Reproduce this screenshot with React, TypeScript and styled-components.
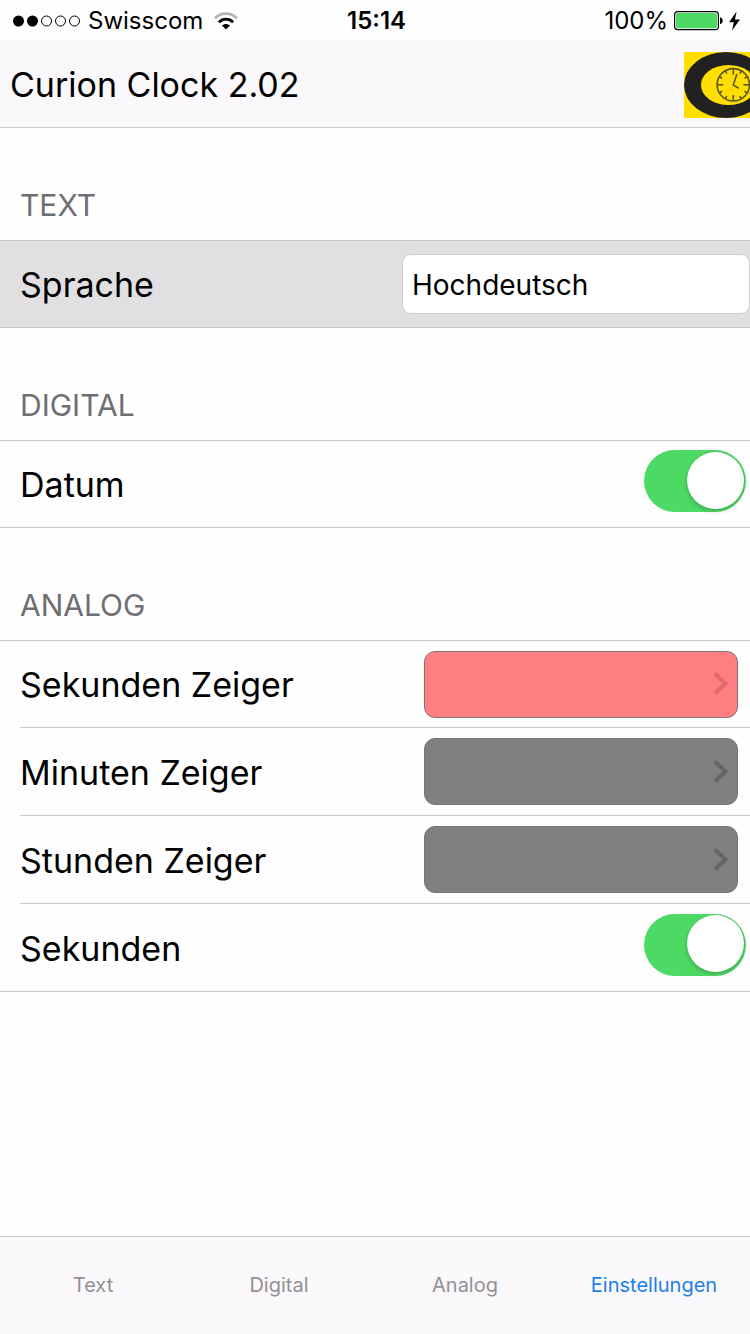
import React, { useState } from 'react';
import styled, { createGlobalStyle } from 'styled-components';

const GlobalStyle = createGlobalStyle`
  *, *::before, *::after { box-sizing: border-box; }
  body {
    margin: 0;
    background: #fefefe;
    color: #000;
    font-family: Inter, Roboto, "Liberation Sans", sans-serif;
  }
  button, select { font: inherit; color: inherit; }
`;

const LINE = '#c9c8cc';
const BAR = '#faf8fb';

const Page = styled.div`
  display: flex;
  flex-direction: column;
  min-height: 100vh;
`;

const StatusBar = styled.div`
  display: grid;
  grid-template-columns: 1fr auto 1fr;
  align-items: center;
  height: 40px;
  padding: 2px 10px 0 13px;
  font-size: 24px;
  line-height: 38px;
`;

const StatusGroup = styled.div<{ $end?: boolean; $gap: number }>`
  display: flex;
  align-items: center;
  justify-content: ${(p) => (p.$end ? 'flex-end' : 'flex-start')};
  gap: ${(p) => p.$gap}px;
`;

const Time = styled.span`
  font-weight: 600;
`;

const TitleBar = styled.header`
  display: flex;
  align-items: center;
  justify-content: space-between;
  height: 88px;
  padding: 2px 0 0 10px;
  background: ${BAR};
  border-bottom: 1px solid ${LINE};
`;

const Title = styled.h1`
  margin: 0;
  font-size: 34px;
  font-weight: 400;
  line-height: 40px;
`;

const Main = styled.main`
  flex: 1;
`;

const SectionTitle = styled.h2`
  margin: 0;
  padding: 57px 20px 15px;
  color: #6f6e73;
  font-size: 30px;
  font-weight: 400;
  line-height: 40px;
`;

const Group = styled.ul`
  margin: 0;
  padding: 0;
  list-style: none;
  border-top: 1px solid ${LINE};
  border-bottom: 1px solid ${LINE};
`;

const RowBody = styled.div<{ $inset: number }>`
  display: flex;
  align-items: center;
  justify-content: space-between;
  height: 88px;
  padding-right: ${(p) => p.$inset}px;
  border-bottom: 1px solid ${LINE};
`;

const RowItem = styled.li<{ $selected?: boolean }>`
  padding-left: 20px;
  background: ${(p) => (p.$selected ? '#e1dfe2' : 'transparent')};

  &:last-child > ${RowBody} { height: 87px; border-bottom: 0; }
  &:only-child > ${RowBody} { height: 86px; }
  &:first-child:not(:only-child) > ${RowBody} { height: 87px; }
`;

const RowLabel = styled.label`
  padding-top: 2px;
  font-size: 34px;
  line-height: 40px;
`;

const Select = styled.select`
  appearance: none;
  width: 348px;
  height: 60px;
  padding: 2px 9px 0;
  border: 1px solid #cdccd0;
  border-radius: 9px;
  background: #fff;
  font-size: 28px;
`;

const Swatch = styled.button<{ $color: string }>`
  display: flex;
  align-items: center;
  justify-content: flex-end;
  width: 314px;
  height: 67px;
  padding: 0 8px;
  border: 1px solid #7b7376;
  border-radius: 11px;
  background: ${(p) => p.$color};
`;

const Switch = styled.input`
  appearance: none;
  display: flex;
  align-items: center;
  width: 102px;
  height: 62px;
  margin: 0 0 6px;
  padding: 0 2px 2px;
  border-radius: 31px;
  background: #e5e5ea;

  &::before {
    content: '';
    width: 57px;
    height: 57px;
    border-radius: 50%;
    background: #fff;
    box-shadow: 0 3px 4px rgba(0, 0, 0, 0.14), 0 0 2px rgba(0, 0, 0, 0.2);
  }

  &:checked {
    justify-content: flex-end;
    background: #4cd964;
  }
`;

const TabBar = styled.nav`
  display: flex;
  height: 98px;
  border-top: 1px solid ${LINE};
  background: ${BAR};
`;

const Tab = styled.a<{ $active?: boolean }>`
  display: flex;
  align-items: center;
  justify-content: center;
  flex: 0 0 24.8%;
  padding-bottom: 2px;
  color: ${(p) => (p.$active ? '#1c81ea' : '#929195')};
  font-size: 20px;
  text-decoration: none;

  &:last-child { flex: 1; }
`;

const Signal = () => (
  <svg width="67" height="12" viewBox="0 0 67 12" aria-hidden="true">
    {[0, 1, 2, 3, 4].map((i) => (
      <circle
        key={i}
        cx={5.5 + i * 14}
        cy="6"
        r={i < 2 ? 5.5 : 5}
        fill={i < 2 ? '#000' : 'none'}
        stroke={i < 2 ? 'none' : '#000'}
      />
    ))}
  </svg>
);

const Wifi = () => (
  <svg width="28" height="18" viewBox="-3 0 28 18" fill="none" strokeWidth="2.8" aria-hidden="true">
    <path d="M1 6.2 C7 .2 17 .2 23 6.2" stroke="#b4b3b6" />
    <path d="M4.9 10.2 C9 6.2 15 6.2 19.1 10.2" stroke="#000" />
    <path d="M12 17.6 L7.9 13.6 C10.3 11.5 13.7 11.5 16.1 13.6 Z" fill="#000" />
  </svg>
);

const Battery = () => (
  <svg width="49" height="20" viewBox="0 0 49 20" aria-hidden="true">
    <rect x=".6" y=".6" width="43.8" height="18" rx="3.2" fill="#fff" stroke="#000" strokeWidth="1.2" />
    <rect x="2" y="2" width="41" height="15.2" rx="1.8" fill="#4cd964" />
    <path d="M46 6.2 C49.6 7 49.6 12.4 46 13.2 Z" fill="#000" />
  </svg>
);

const Bolt = () => (
  <svg width="11" height="20" viewBox="0 0 11 20" aria-hidden="true">
    <path d="M7.6 .4 L0 11.2 H4.8 L3 19.6 L11 8.4 H6 Z" fill="#000" />
  </svg>
);

const Logo = () => (
  <svg width="66" height="66" viewBox="0 0 66 66" role="img" aria-label="Curion">
    <rect width="66" height="66" fill="#ffde00" />
    <ellipse cx="42" cy="33" rx="42" ry="33" fill="#222122" />
    <ellipse cx="44.5" cy="33" rx="27.5" ry="20" fill="#ffde00" />
    <g stroke="#5c5418" fill="none" strokeWidth="1.6">
      <circle cx="49.3" cy="32.8" r="16.2" />
      {Array.from({ length: 12 }, (_, i) => (
        <path
          key={i}
          d={i % 3 === 0 ? 'M49.3 17 V22.6' : 'M49.3 17 V19.8'}
          transform={`rotate(${i * 30} 49.3 32.8)`}
        />
      ))}
      <path d="M52.9 22 L49.3 32.8 L54.8 36.4" />
    </g>
  </svg>
);

const Chevron = ({ color }: { color: string }) => (
  <svg width="16" height="26" viewBox="0 0 16 26" fill="none" aria-hidden="true">
    <path d="M2 2.5 L12.4 12.5 L2 22.5" stroke={color} strokeWidth="4" />
  </svg>
);

const hands = [
  { id: 'second', label: 'Sekunden Zeiger', color: '#ff7f81', arrow: '#e06a6f' },
  { id: 'minute', label: 'Minuten Zeiger', color: '#817f81', arrow: '#666467' },
  { id: 'hour', label: 'Stunden Zeiger', color: '#817f81', arrow: '#666467' },
];

const tabs = ['Text', 'Digital', 'Analog', 'Einstellungen'];

export default function App() {
  const [language, setLanguage] = useState('Hochdeutsch');
  const [showDate, setShowDate] = useState(true);
  const [showSeconds, setShowSeconds] = useState(true);

  return (
    <Page>
      <GlobalStyle />
      <StatusBar>
        <StatusGroup $gap={8}>
          <Signal />
          <span>Swisscom</span>
          <Wifi />
        </StatusGroup>
        <Time>15:14</Time>
        <StatusGroup $end $gap={6}>
          <span>100%</span>
          <Battery />
          <Bolt />
        </StatusGroup>
      </StatusBar>

      <TitleBar>
        <Title>Curion Clock 2.02</Title>
        <Logo />
      </TitleBar>

      <Main>
        <SectionTitle>TEXT</SectionTitle>
        <Group>
          <RowItem $selected>
            <RowBody $inset={0}>
              <RowLabel htmlFor="language">Sprache</RowLabel>
              <Select id="language" value={language} onChange={(e) => setLanguage(e.target.value)}>
                <option>Hochdeutsch</option>
              </Select>
            </RowBody>
          </RowItem>
        </Group>

        <SectionTitle>DIGITAL</SectionTitle>
        <Group>
          <RowItem>
            <RowBody $inset={4}>
              <RowLabel htmlFor="date">Datum</RowLabel>
              <Switch
                id="date"
                type="checkbox"
                checked={showDate}
                onChange={(e) => setShowDate(e.target.checked)}
              />
            </RowBody>
          </RowItem>
        </Group>

        <SectionTitle>ANALOG</SectionTitle>
        <Group>
          {hands.map((hand) => (
            <RowItem key={hand.id}>
              <RowBody $inset={12}>
                <RowLabel htmlFor={hand.id}>{hand.label}</RowLabel>
                <Swatch id={hand.id} type="button" $color={hand.color}>
                  <Chevron color={hand.arrow} />
                </Swatch>
              </RowBody>
            </RowItem>
          ))}
          <RowItem>
            <RowBody $inset={4}>
              <RowLabel htmlFor="seconds">Sekunden</RowLabel>
              <Switch
                id="seconds"
                type="checkbox"
                checked={showSeconds}
                onChange={(e) => setShowSeconds(e.target.checked)}
              />
            </RowBody>
          </RowItem>
        </Group>
      </Main>

      <TabBar>
        {tabs.map((tab) => (
          <Tab key={tab} href={`#${tab.toLowerCase()}`} $active={tab === 'Einstellungen'}>
            {tab}
          </Tab>
        ))}
      </TabBar>
    </Page>
  );
}
